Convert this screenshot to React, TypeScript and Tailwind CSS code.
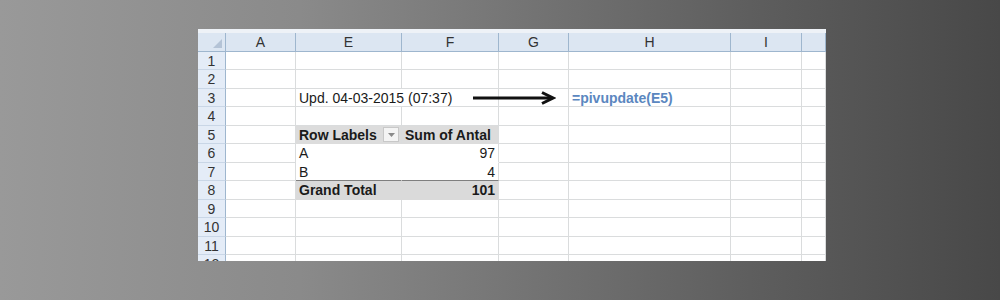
import type { ReactNode } from "react";

const COLS = "grid grid-cols-[28px_70px_106px_97px_70px_162px_71px_1fr]";
const FONT = { fontFamily: '"Liberation Sans", Arial, sans-serif' };

// row heights alternate 18 / 19 like the screenshot
const ROW_HEIGHTS = ["h-[18px]", "h-[19px]"];

function Cell({ children, className = "" }: { children?: ReactNode; className?: string }) {
  return (
    <div
      className={`flex items-center overflow-visible whitespace-nowrap border-r border-b border-[#dadcdd] px-[3px] text-[14px] leading-none text-[#1a1a1a] ${className}`}
    >
      {children}
    </div>
  );
}

function RowHead({ n }: { n: number }) {
  return (
    <div className="flex items-center justify-center border-r border-b border-r-[#9eb6ce] border-b-[#c9d6e6] bg-[#e4ecf7] text-[14px] leading-none text-[#333]">
      {n}
    </div>
  );
}

function SheetRow({ n, children }: { n: number; children: ReactNode }) {
  return (
    <div className={`${COLS} ${ROW_HEIGHTS[(n - 1) % 2]}`}>
      <RowHead n={n} />
      {children}
    </div>
  );
}

function DropButton() {
  return (
    <div className="ml-auto mr-[2px] flex h-[15px] w-[16px] items-center justify-center border border-[#c8c8c8] bg-[#f4f4f4]">
      <svg width="7" height="4" viewBox="0 0 7 4">
        <path d="M0 0h7L3.5 4z" fill="#8a8a8a" />
      </svg>
    </div>
  );
}

function Header() {
  const letters = ["A", "E", "F", "G", "H", "I", ""];
  return (
    <div className={`${COLS} h-[19px] bg-[#dce6f2]`}>
      <div className="relative border-r border-b border-[#9eb6ce]">
        <svg className="absolute bottom-[3px] right-[3px]" width="9" height="9" viewBox="0 0 9 9">
          <path d="M9 0v9H0z" fill="#b4c3d6" />
        </svg>
      </div>
      {letters.map((l, i) => (
        <div
          key={i}
          className="flex items-center justify-center border-r border-b border-[#9eb6ce] text-[14px] leading-none text-[#333]"
        >
          {l}
        </div>
      ))}
    </div>
  );
}

function Blank({ count }: { count: number }) {
  return (
    <>
      {Array.from({ length: count }).map((_, i) => (
        <Cell key={i} />
      ))}
    </>
  );
}

export default function App() {
  return (
    <div
      className="h-[300px] w-[1000px] overflow-hidden bg-[linear-gradient(90deg,#999999_0%,#8a8a8a_30%,#5e5e5e_75%,#484848_100%)] pl-[198px] pt-[29px]"
      style={FONT}
    >
      <div className="relative h-[232px] w-[628px] overflow-hidden bg-white">
        <div className="h-[4px] bg-[#eef2f7]" />
        <Header />

        <SheetRow n={1}>
          <Blank count={7} />
        </SheetRow>
        <SheetRow n={2}>
          <Blank count={7} />
        </SheetRow>
        <SheetRow n={3}>
          <Cell />
          <Cell className="col-span-2">Upd. 04-03-2015 (07:37)</Cell>
          <Cell />
          <Cell className="font-bold text-[#5b87c0]">=pivupdate(E5)</Cell>
          <Blank count={2} />
        </SheetRow>
        <SheetRow n={4}>
          <Blank count={7} />
        </SheetRow>
        <SheetRow n={5}>
          <Cell />
          <Cell className="border-b-[#dcdcdc] bg-[#dcdcdc] pr-0 font-bold">
            Row Labels
            <DropButton />
          </Cell>
          <Cell className="border-b-[#dcdcdc] border-r-[#dadcdd] bg-[#dcdcdc] font-bold">Sum of Antal</Cell>
          <Blank count={4} />
        </SheetRow>
        <SheetRow n={6}>
          <Cell />
          <Cell className="border-r-white border-b-white">A</Cell>
          <Cell className="justify-end border-b-white">97</Cell>
          <Blank count={4} />
        </SheetRow>
        <SheetRow n={7}>
          <Cell />
          <Cell className="border-r-white border-b-[#7f7f7f]">B</Cell>
          <Cell className="justify-end border-b-[#7f7f7f]">4</Cell>
          <Blank count={4} />
        </SheetRow>
        <SheetRow n={8}>
          <Cell />
          <Cell className="border-r-[#dadada] border-b-[#dadada] bg-[#dadada] font-bold">Grand Total</Cell>
          <Cell className="justify-end border-b-[#dadada] bg-[#dadada] font-bold">101</Cell>
          <Blank count={4} />
        </SheetRow>
        {[9, 10, 11, 12].map((n) => (
          <SheetRow key={n} n={n}>
            <Blank count={7} />
          </SheetRow>
        ))}

        {/* drawn arrow shape lying over the grid */}
        <svg className="absolute left-[274px] top-[62px]" width="84" height="14" viewBox="0 0 84 14">
          <path d="M1 7H80" stroke="#111" strokeWidth="3" />
          <path d="M70 1.5L81 7L70 12.5" fill="none" stroke="#111" strokeWidth="3" strokeLinejoin="miter" />
        </svg>
      </div>
    </div>
  );
}
